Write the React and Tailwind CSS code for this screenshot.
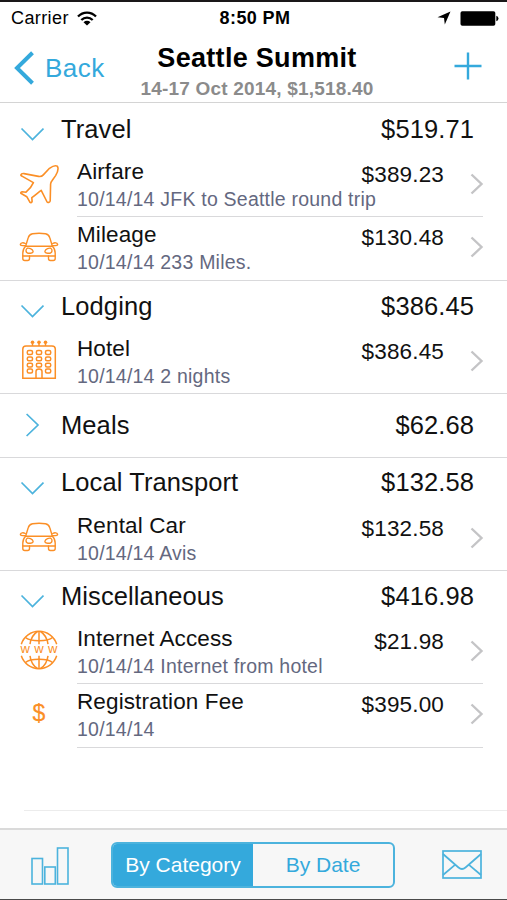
// ============================================
// FILE: App.jsx
// WHAT IT DOES: Trip expense screen with expenses
// grouped by category, a nav bar and a bottom toolbar.
// ============================================
import React, { useState } from 'react';

const categories = [
    {
        name: 'Travel', total: '$519.71', open: true,
        items: [
            { icon: 'plane', name: 'Airfare', detail: '10/14/14 JFK to Seattle round trip', amount: '$389.23' },
            { icon: 'car', name: 'Mileage', detail: '10/14/14 233 Miles.', amount: '$130.48' },
        ],
    },
    {
        name: 'Lodging', total: '$386.45', open: true,
        items: [{ icon: 'hotel', name: 'Hotel', detail: '10/14/14 2 nights', amount: '$386.45' }],
    },
    { name: 'Meals', total: '$62.68', open: false, items: [] },
    {
        name: 'Local Transport', total: '$132.58', open: true,
        items: [{ icon: 'car', name: 'Rental Car', detail: '10/14/14 Avis', amount: '$132.58' }],
    },
    {
        name: 'Miscellaneous', total: '$416.98', open: true,
        items: [
            { icon: 'globe', name: 'Internet Access', detail: '10/14/14 Internet from hotel', amount: '$21.98' },
            { icon: 'dollar', name: 'Registration Fee', detail: '10/14/14', amount: '$395.00' },
        ],
    },
];

function PlaneIcon() {
    return (
        <svg viewBox="0 0 40 40" className="w-10 h-10" fill="none" stroke="#fb8f26" strokeWidth="1.6" strokeLinejoin="round">
            <path d="M38.3 2.2C36.5 1 33 2.5 30.5 4.3L24.3 10.9C22.8 12.6 21.6 12.9 19.5 12.4L5 9.6C3.4 9.4 2.2 9.8 1.8 11C2 11.8 2.6 12 3.4 12.4L14.4 18.6C13 22 10 25.5 7 28.2L3.2 27.7C2.2 27.7 1.7 28.4 1.8 29.2L7.8 32.7L11 38.3C11.9 39 12.8 38.3 13.1 37.4L12.8 33.6C16 31.5 19 28.6 22.2 26.3L28.1 38C28.6 39 31 38.3 31.2 37L31.6 20C31.7 18.8 32.2 17.8 33 16.8L36.6 11.6C38.5 8.3 39.8 4.2 38.3 2.2Z" />
        </svg>
    );
}

function CarIcon() {
    return (
        <svg viewBox="0 0 40 30" className="w-10 h-[30px]" fill="none" stroke="#fb8f26" strokeWidth="1.4" strokeLinejoin="round" strokeLinecap="round">
            <path d="M6.6 14.2L9.2 5.8C9.9 3.3 11.3 2.2 13.5 1.8C18 1.1 22.2 1.1 26.5 1.8C28.7 2.2 30.1 3.3 30.8 5.8L33.4 14.2Z" />
            <path d="M6.6 14.2C4.6 16 3.8 18.5 3.8 21V26.5C3.8 27.8 4.6 28.5 5.8 28.5H8.6C9.8 28.5 10.5 27.8 10.5 26.5V24H29.5V26.5C29.5 27.8 30.2 28.5 31.4 28.5H34.2C35.4 28.5 36.2 27.8 36.2 26.5V21C36.2 18.5 35.4 16 33.4 14.2" />
            <path d="M3.8 24H10.5M29.5 24H36.2M6.3 11.5C4.3 10.4 2 10.6 1.4 12.2C1.2 13.4 2 13.7 6.3 13.8M33.7 11.5C35.7 10.4 38 10.6 38.6 12.2C38.8 13.4 38 13.7 33.7 13.8" />
            <path d="M8.2 16.2C6.5 17.4 6.5 20.4 8.7 21.2H11.5C14 21.2 14.8 19.6 13.5 18.1C12.2 16.7 10.2 15.9 8.2 16.2ZM31.8 16.2C33.5 17.4 33.5 20.4 31.3 21.2H28.5C26 21.2 25.2 19.6 26.5 18.1C27.8 16.7 29.8 15.9 31.8 16.2Z" />
        </svg>
    );
}

function HotelIcon() {
    const cols = [8.3, 17.4, 26.5];
    const rows = [10.6, 16.9, 23.2, 29];
    return (
        <svg viewBox="0 0 40 40" className="w-10 h-10" fill="none" stroke="#fb8f26" strokeWidth="1.5">
            <path d="M3.8 38.3V9Q3.8 5.9 7 5.9H33Q36.3 5.9 36.3 9V38.3Z" />
            {[13.5, 20, 26.5].map(x => (
                <g key={x}>
                    <circle cx={x} cy="2.3" r="1.8" fill="#fb8f26" stroke="none" />
                    <path d={`M${x} 3V5.9`} />
                </g>
            ))}
            {rows.map((y, r) => cols.map((x, c) => (
                r === 3 && c === 1 ? null : <rect key={`${x}-${y}`} x={x} y={y} width="5.2" height="3.9" rx="1.5" />
            )))}
            <path d="M17 38.3V31.5Q17 29 20 29Q23 29 23 31.5V38.3" />
        </svg>
    );
}

function GlobeIcon() {
    return (
        <svg viewBox="0 0 40 40" className="w-10 h-10" fill="none" stroke="#fb8f26" strokeWidth="1.5">
            <path d="M2.3 14.2A18.6 18.6 0 0 1 37.7 14.2M2.3 25.8A18.6 18.6 0 0 0 37.7 25.8" />
            <path d="M20 1.3V14.2M20 25.8V38.7M11 14.2C11.7 9 14.5 4 18.5 1.5M29 14.2C28.3 9 25.5 4 21.5 1.5M11 25.8C11.7 31 14.5 36 18.5 38.5M29 25.8C28.3 31 25.5 36 21.5 38.5" />
            <path d="M6.5 7.5C11 11.7 29 11.7 33.5 7.5M6.5 32.5C11 28.3 29 28.3 33.5 32.5" />
            <text x="1.6" y="23.4" textLength="36.8" fontSize="13" fontFamily="Liberation Sans, sans-serif" fill="#fb8f26" stroke="none">www</text>
        </svg>
    );
}

function ItemIcon({ icon }) {
    if (icon === 'plane') return <PlaneIcon />;
    if (icon === 'car') return <CarIcon />;
    if (icon === 'hotel') return <HotelIcon />;
    if (icon === 'globe') return <GlobeIcon />;
    return <span className="text-[23px] leading-none text-[#fb8f26] [-webkit-text-stroke:0.2px_#fb8f26]">$</span>;
}

// Arrow left of the category name, points down when the category is open
function Disclosure({ open }) {
    return (
        <svg viewBox="0 0 24 24" className={open ? 'w-6 h-6 mt-2.5' : 'w-6 h-6'} fill="none" stroke="#4cb3dd" strokeWidth="1.7">
            <path d={open ? 'M1.5 6.5L12.5 17.5L23.5 6.5' : 'M6.6 1L18 12L6.6 23'} />
        </svg>
    );
}

function ExpenseRow({ item, divider }) {
    return (
        <div className="flex h-full pl-[19px] pr-6">
            <div className="w-10 h-[59px] flex items-center justify-center">
                <ItemIcon icon={item.icon} />
            </div>
            <div className={`ml-[18px] flex-1 flex ${divider ? 'border-b border-[#d9d9db]' : ''}`}>
                <div className="pt-[5px] whitespace-nowrap w-[270px]">
                    <div className="text-[22.5px] leading-[26px] tracking-[0.12px]">{item.name}</div>
                    <div className="text-[19.5px] leading-7 tracking-[0.22px] text-[#64687f]">{item.detail}</div>
                </div>
                <div className="flex-1 pt-2 text-right text-[22.5px] leading-[26px] tracking-[0.15px]">{item.amount}</div>
                <svg viewBox="0 0 14 22" className="w-3.5 h-[22px] mt-[19px] ml-[26px] -mr-px" fill="none" stroke="#c4c4c6" strokeWidth="2.4">
                    <path d="M1.5 1.5L11.500 11L1.5 20.5" />
                </svg>
            </div>
        </div>
    );
}

function Category({ category, last }) {
    const count = category.items.length;

    return (
        <section className={last ? '' : 'border-b border-[#d9d9db]'}>
            <div className={`flex items-center pl-5 pr-[33px] text-[25.5px] tracking-[0.1px] ${category.open ? 'h-[50px]' : 'h-[62.4px]'}`}>
                <Disclosure open={category.open} />
                <span className="ml-[17px] flex-1">{category.name}</span>
                <span>{category.total}</span>
            </div>
            {category.items.map((item, i) => {
                // the section's own border closes the last row
                const divider = last || i < count - 1;
                return (
                    <div key={item.name} className={divider ? 'h-[63.4px]' : 'h-[62.4px]'}>
                        <ExpenseRow item={item} divider={divider} />
                    </div>
                );
            })}
        </section>
    );
}

export default function App() {
    const [view, setView] = useState('category');

    return (
        <div className="w-[507px] h-[900px] flex flex-col bg-white text-[#111] border-t-2 border-t-[#1a1819] border-b border-b-[#4a4a4a] overflow-hidden font-['Liberation_Sans',Arial,sans-serif]">
            {/* Status Bar */}
            <div className="h-8 shrink-0 grid grid-cols-3 items-center pl-[11px] pr-2 text-lg text-black">
                <div className="flex items-center gap-2">
                    <span className="tracking-[0.4px]">Carrier</span>
                    <svg viewBox="0 0 20 15" className="w-5 h-[15px]" fill="none" stroke="#000" strokeWidth="2.3">
                        <path d="M1 5.5C6 0.3 14 0.3 19 5.5M4.3 9C7.6 5.7 12.4 5.7 15.7 9" />
                        <path d="M10 14.5L6.5 11.2C8.5 9.4 11.5 9.4 13.5 11.2Z" fill="#000" stroke="none" />
                    </svg>
                </div>
                <span className="text-center font-bold tracking-[0.4px]">8:50 PM</span>
                <div className="flex items-center justify-end gap-[9px]">
                    <svg viewBox="0 0 14 14" className="w-3.5 h-3.5" fill="#000">
                        <path d="M13.5 0.5L7.8 13.5L7 7L0.5 6.3Z" />
                    </svg>
                    <svg viewBox="0 0 39 15" className="w-[39px] h-[15px]" fill="#000">
                        <rect x="0.5" y="0.3" width="34.8" height="14.4" rx="1.8" />
                        <path d="M36.3 4.8Q38.5 5.5 38.5 7.5Q38.5 9.5 36.3 10.2Z" />
                    </svg>
                </div>
            </div>

            {/* Nav Bar */}
            <header className="h-[69px] shrink-0 grid grid-cols-[120px_1fr_120px] border-b border-[#d4d4d4]">
                <button className="flex items-center gap-2.5 pl-3.5 pb-0.5 text-[#34a9dc]">
                    <svg viewBox="0 0 21 34" className="w-[21px] h-[34px]" fill="none" stroke="currentColor" strokeWidth="4">
                        <path d="M18.5 1.8L3 17L18.5 32.2" />
                    </svg>
                    <span className="text-[26px] tracking-[0.5px]">Back</span>
                </button>
                <div className="text-center whitespace-nowrap pt-2 pl-[7px]">
                    <h1 className="text-[27px] leading-8 font-bold tracking-[0.3px] text-black">Seattle Summit</h1>
                    <p className="text-[19px] leading-[30px] font-bold tracking-[0.2px] text-[#8b8b8b]">14-17 Oct 2014, $1,518.40</p>
                </div>
                <div className="flex items-center justify-end pr-[25px] pb-1.5">
                    <svg viewBox="0 0 28 28" className="w-7 h-7" stroke="#34a9dc" strokeWidth="2.4">
                        <path d="M14 0.5V27.5M0.5 14H27.5" />
                    </svg>
                </div>
            </header>

            {/* Expense List */}
            <main className="flex-1 pt-px">
                {categories.map((category, i) => (
                    <Category key={category.name} category={category} last={i === categories.length - 1} />
                ))}
                <div className="ml-6 h-[63px] border-b border-[#ececec]" />
            </main>

            {/* Bottom Toolbar */}
            <footer className="h-[71px] shrink-0 flex items-center bg-[#f7f7f7] border-t-2 border-[#dadada] pl-[31px] pr-[25px]">
                <svg viewBox="0 0 38 38" className="w-[38px] h-[38px] mt-0.5" fill="none" stroke="#4cb3dd" strokeWidth="1.6">
                    <rect x="1" y="11.5" width="10.5" height="25.5" />
                    <rect x="13.8" y="20" width="10.5" height="17" />
                    <rect x="26.5" y="1" width="10.5" height="36" />
                </svg>
                <div className="ml-[42px] w-[284px] h-[46px] mt-px grid grid-cols-2 rounded-md border-2 border-[#4cb3dd] overflow-hidden text-[21px]">
                    <button
                        onClick={() => setView('category')}
                        className={view === 'category' ? 'bg-[#34a9dc] text-white' : 'text-[#34a9dc]'}
                    >
                        By Category
                    </button>
                    <button
                        onClick={() => setView('date')}
                        className={view === 'date' ? 'bg-[#34a9dc] text-white' : 'text-[#34a9dc]'}
                    >
                        By Date
                    </button>
                </div>
                <svg viewBox="0 0 40 29" className="w-10 h-[29px] ml-auto" fill="none" stroke="#4cb3dd" strokeWidth="1.7">
                    <rect x="1" y="1" width="38" height="27" />
                    <path d="M1 4L16.5 17.5Q20 20.5 23.5 17.5L39 4M1 25L13.3 14.7M39 25L26.7 14.7" />
                </svg>
            </footer>
        </div>
    );
}
